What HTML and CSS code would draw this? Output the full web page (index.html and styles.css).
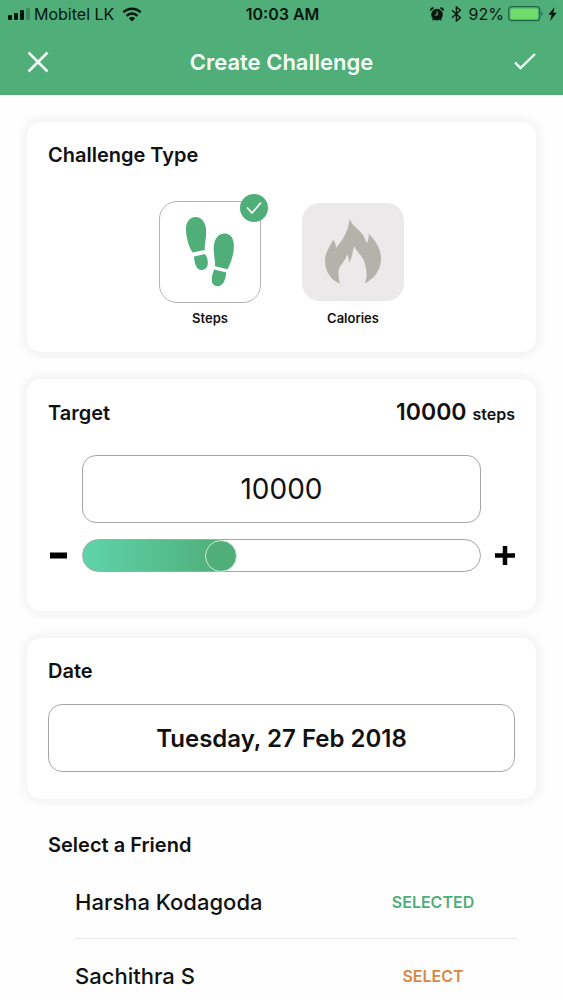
FILE: index.html
```html
<!DOCTYPE html>
<html lang="en">
<head>
    <meta charset="UTF-8">
    <meta name="viewport" content="width=device-width, initial-scale=1.0">
    <title>Create Challenge</title>
    <link rel="stylesheet" href="styles.css">
</head>
<body>
    <div class="screen">
        <header class="top">
            <div class="status-bar">
                <div class="status-left">
                    <svg width="22" height="14" viewBox="0 0 22 14">
                        <rect x="0" y="8" width="4" height="5" rx="1"/>
                        <rect x="6" y="6" width="4" height="7" rx="1"/>
                        <rect x="12" y="3" width="4" height="10" rx="1"/>
                        <rect x="18" y="1" width="4" height="12" rx="1" opacity="0.25"/>
                    </svg>
                    <span class="carrier">Mobitel LK</span>
                    <svg width="20" height="15" viewBox="0 0 20 15" fill="none" stroke="#08170e" stroke-width="2.5">
                        <path d="M1.4 5.4a12.2 12.2 0 0 1 17.2 0"/>
                        <path d="M4.6 8.8a7.6 7.6 0 0 1 10.8 0"/>
                        <path d="M10 14.5l-3.2-3.2a4.6 4.6 0 0 1 6.4 0z" fill="#08170e" stroke="none"/>
                    </svg>
                </div>
                <span class="clock">10:03 AM</span>
                <div class="status-right">
                    <svg width="14" height="14" viewBox="0 0 14 14">
                        <circle cx="7" cy="7.6" r="5.8"/>
                        <path d="M0.600 4.200A2.500 2.500 0 0 1 4.200 0.900zM13.400 4.200A2.500 2.500 0 0 0 9.800 0.900z"/>
                        <path d="M3.500 12l-.8 1.300M10.500 12l.8 1.300" stroke="#08170e" stroke-width="1.400"/>
                        <path d="M7.2 4.6v3.4H4.6" fill="none" stroke="#50ae79" stroke-width="1.2"/>
                    </svg>
                    <svg class="bluetooth" width="11" height="16" viewBox="0 0 11 16" fill="none" stroke="#08170e" stroke-width="1.4">
                        <path d="M1 4.3l8.4 7.4-4 3.3V1l4 3.3L1 11.7"/>
                    </svg>
                    <span>92%</span>
                    <svg width="36" height="16" viewBox="0 0 36 16">
                        <rect x="0.7" y="0.7" width="31" height="14" rx="3" fill="none" stroke="#1f6b48" stroke-width="1.3"/>
                        <rect x="2.5" y="2.5" width="27.400" height="10.4" rx="1.5" fill="#6fdc6c"/>
                        <path d="M33.3 5.4a2.6 2.6 0 0 1 0 4.6z" fill="#1f6b48"/>
                    </svg>
                    <svg width="9" height="14" viewBox="0 0 9 14"><path d="M6.6 0L0.4 7.8h3.2L2.2 14l6.5-8.2H5.4z"/></svg>
                </div>
            </div>
            <div class="nav">
                <button type="button" class="nav-button" aria-label="Close">
                    <svg width="22" height="22" viewBox="0 0 22 22"><path d="M1.5 1.5l19 19M20.5 1.5l-19 19" stroke-width="2.5"/></svg>
                </button>
                <h1>Create Challenge</h1>
                <button type="button" class="nav-button" aria-label="Save">
                    <svg width="22" height="22" viewBox="0 0 22 22"><path d="M1 11.5l5.5 5.5L21 3" stroke-width="2.4"/></svg>
                </button>
            </div>
        </header>

        <main class="content">
            <section class="card type-card">
                <h2>Challenge Type</h2>
                <div class="types">
                    <label class="type">
                        <input type="radio" name="type" value="steps" checked>
                        <span class="tile">
                            <svg width="50" height="72" viewBox="0 0 50 72" fill="#50ae79">
                                <path d="M7.5 36.6C3 29 1 20 1 13 1 6 4.500 1 10.500 1 17 1 21 7 21.200 15 21.400 22 19.500 28 19.700 34z"/>
                                <path d="M9 40.500l11-2.500c2 3 3.200 6.500 2.800 10-.3 3.400-2.300 5.600-5.300 6C11.500 54.500 9.500 48 9 40.500z"/>
                                <path d="M30 50.200c.4-6-1.500-11.500-1.300-18.500C29 23.500 33 17.500 39.500 17.500c6.500 0 9.600 5.500 9.400 13C48.700 38 46.500 46 42.500 53.200z"/>
                                <path d="M29.200 53.600l12 3c-.4 7.400-3.200 13.700-8.700 13.700-3.700 0-5.800-2.900-5.700-6.700.1-3.600 1-6.900 2.400-10z"/>
                            </svg>
                        </span>
                        <span class="tick">
                            <svg width="16" height="14" viewBox="0 0 16 14"><path d="M1 6.500L6 12 15 1.500" fill="none" stroke="#fff" stroke-width="1.6"/></svg>
                        </span>
                        <span class="type-name">Steps</span>
                    </label>
                    <label class="type">
                        <input type="radio" name="type" value="calories">
                        <span class="tile">
                            <svg width="58" height="66" viewBox="0 0 58 66" fill="#b3b3ac">
                                <path d="M25.500 0C28 8 40 12 42.500 24 44.500 21 45 18 44.500 14.500 51 21 57 29 57 40c0 11-7.500 20.500-16.500 24.500C43.500 60 43 50 40 42c-2.200-6-7.500-9-9.500-14.500C28 32 29 38 25 43.500 25 40 24.500 38 23 35.500 21 43 15 46 14.500 53c-.3 4.500.5 8 1.500 11.500C7 61.500 1 52 1 42 1 32 7 27.500 9 20.500c2.200 2.500 2.800 5 3 8.500C19 20.500 24.500 12 25.500 0z"/>
                            </svg>
                        </span>
                        <span class="tick">
                            <svg width="16" height="14" viewBox="0 0 16 14"><path d="M1 6.500L6 12 15 1.500" fill="none" stroke="#fff" stroke-width="1.6"/></svg>
                        </span>
                        <span class="type-name">Calories</span>
                    </label>
                </div>
            </section>

            <section class="card target-card">
                <div class="card-head">
                    <h2><label for="target">Target</label></h2>
                    <p class="total"><strong>10000</strong>steps</p>
                </div>
                <div class="target-grid">
                    <input type="text" id="target" class="box target-input" value="10000" inputmode="numeric">
                    <button type="button" class="step-button minus" aria-label="Decrease">
                        <svg width="20" height="19" viewBox="0 0 20 19"><path d="M2 9.500h17" stroke="#000" stroke-width="6"/></svg>
                    </button>
                    <input type="range" class="slider" min="0" max="30000" step="500" value="10000" aria-label="Target steps">
                    <button type="button" class="step-button plus" aria-label="Increase">
                        <svg width="20" height="19" viewBox="0 0 20 19"><path d="M0 9.500h20M10 0v19" stroke="#000" stroke-width="4.500"/></svg>
                    </button>
                </div>
            </section>

            <section class="card date-card">
                <h2>Date</h2>
                <button type="button" class="box date-button">Tuesday, 27 Feb 2018</button>
            </section>

            <section class="friends">
                <h2>Select a Friend</h2>
                <ul class="friend-list">
                    <li>
                        <span>Harsha Kodagoda</span>
                        <button type="button" class="select selected">SELECTED</button>
                    </li>
                    <li>
                        <span>Sachithra S</span>
                        <button type="button" class="select">SELECT</button>
                    </li>
                </ul>
            </section>
        </main>
    </div>
</body>
</html>
```
FILE: styles.css
```css
* {
    box-sizing: border-box;
}
body {
    margin: 0;
    font-family: Inter, "Liberation Sans", sans-serif;
    color: #111;
    background: #fefefe;
}
button, input {
    font-family: inherit;
    color: inherit;
}
button {
    padding: 0;
    border: none;
    background: none;
    cursor: pointer;
}
h1, h2, p, ul {
    margin: 0;
    padding: 0;
}
svg {
    display: block;
}
.screen {
    display: flex;
    flex-direction: column;
    height: 100vh;
}

/* header */
.top {
    flex: none;
    background: #50ae79;
}
.status-bar {
    display: grid;
    grid-template-columns: 1fr auto 1fr;
    align-items: center;
    height: 28px;
    padding: 0 6px 0 8px;
    font-size: 16px;
    color: #08170e;
    fill: #08170e;
}
.status-left, .status-right {
    display: flex;
    align-items: center;
    gap: 4px;
}
.status-right {
    justify-content: flex-end;
}
.carrier {
    margin-right: 4px;
}
.bluetooth {
    margin: 0 3px;
}
.clock {
    font-weight: 600;
}
.nav {
    display: flex;
    justify-content: space-between;
    align-items: center;
    height: 67px;
    padding: 0 27px;
    color: #f4fff8;
}
.nav h1 {
    font-size: 22px;
    font-weight: 600;
}
.nav-button svg {
    fill: none;
    stroke: #f4fff8;
}

/* cards */
.content {
    flex: 1;
    display: flex;
    flex-direction: column;
    gap: 27px;
    min-height: 0;
    padding: 27px;
    overflow-y: auto;
    scrollbar-width: none;
}
.card {
    flex: none;
    padding: 21px;
    border-radius: 14px;
    background: #fff;
    box-shadow: 0 0 10px 3px #f1eff2;
}
h2 {
    font-size: 20px;
    line-height: 24px;
    font-weight: 600;
}
.box {
    width: 100%;
    height: 68px;
    border: 1px solid #a6a6a6;
    border-radius: 14px;
    background: #fff;
    text-align: center;
}

/* challenge type */
.types {
    display: flex;
    justify-content: center;
    gap: 41px;
    padding: 34px 0 4px;
}
.type {
    position: relative;
    display: flex;
    flex-direction: column;
    align-items: center;
    gap: 6px;
    cursor: pointer;
}
.type input {
    position: absolute;
    opacity: 0;
}
.tile {
    display: flex;
    align-items: center;
    justify-content: center;
    width: 102px;
    height: 98px;
    margin: 2px 0;
    border-radius: 18px;
    background: #ebe9ea;
}
.type input:checked + .tile {
    height: 102px;
    margin: 0;
    border: 1px solid #b4b4b4;
    background: #fff;
}
.tick {
    display: none;
    position: absolute;
    top: -7px;
    right: -7px;
    width: 28px;
    height: 28px;
    align-items: center;
    justify-content: center;
    border-radius: 50%;
    background: #50ae79;
}
.type input:checked ~ .tick {
    display: flex;
}
.type-name {
    font-size: 13px;
    line-height: 18px;
    font-weight: 600;
}

/* target */
.card-head {
    display: flex;
    justify-content: space-between;
    align-items: baseline;
}
.total {
    display: flex;
    align-items: baseline;
    gap: 6px;
    font-size: 16px;
    line-height: 24px;
    font-weight: 600;
}
.total strong {
    font-size: 23px;
    font-weight: 600;
}
.target-grid {
    display: grid;
    grid-template-columns: 20px 1fr 20px;
    gap: 16px 14px;
    align-items: center;
    padding: 29px 0 18px;
}
.target-input {
    grid-column: 2;
    font-size: 28px;
}
.step-button {
    grid-row: 2;
}
.plus {
    grid-column: 3;
}
.slider {
    grid-column: 2;
    appearance: none;
    width: 100%;
    height: 33px;
    margin: 0;
    border: 1px solid #a6a6a6;
    border-radius: 17px;
    background: linear-gradient(to right, #5fd4ab, #50ae79) no-repeat #fff;
    background-size: 35% 100%;
}
.slider::-webkit-slider-thumb {
    appearance: none;
    width: 32px;
    height: 32px;
    border: 1px solid #c8f0d8;
    border-radius: 50%;
    background: #50ae79;
}

/* date */
.date-card {
    padding-bottom: 27px;
}
.date-button {
    margin-top: 21px;
    font-size: 24px;
    font-weight: 600;
}

/* friends */
.friends {
    padding: 7px 19px 0 21px;
}
.friend-list {
    margin: 8px 0 0 27px;
    list-style: none;
}
.friend-list li {
    display: flex;
    justify-content: space-between;
    align-items: center;
    height: 74px;
    border-bottom: 1px solid #ebe6eb;
    font-size: 22px;
    font-weight: 500;
}
.friend-list li:last-child {
    border-bottom: none;
}
.select {
    width: 168px;
    height: 40px;
    font-size: 16px;
    font-weight: 600;
    color: #d9883f;
}
.select.selected {
    color: #50ae79;
}
```
